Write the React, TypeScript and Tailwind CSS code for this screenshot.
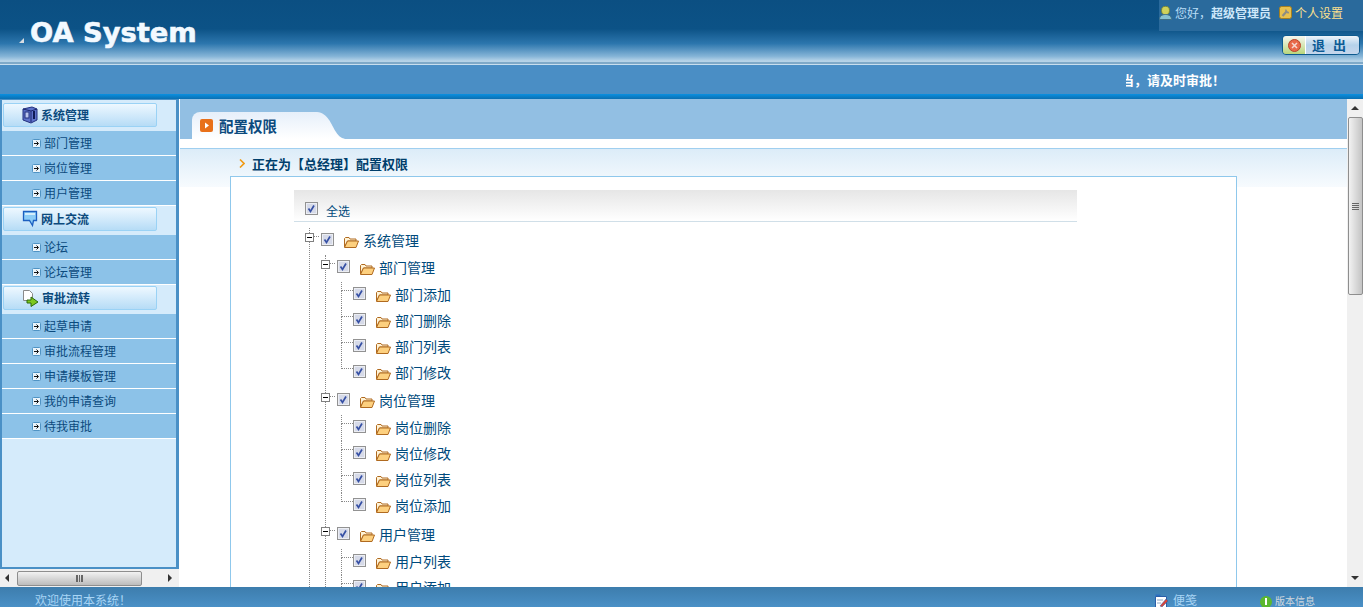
import React from 'react';

const CJK = 'font-["Noto_Sans_CJK_SC","Liberation_Sans",sans-serif]';

function ItemIcon() {
  return (
    <svg width="9" height="9" viewBox="0 0 9 9" className="shrink-0">
      <rect x="0.5" y="0.5" width="8" height="8" rx="1" fill="#eaf4fb" stroke="#4f93c4" />
      <path d="M2 4.5h4M4.5 2.5l2 2-2 2" fill="none" stroke="#111" strokeWidth="1" />
    </svg>
  );
}

function CheckBox() {
  return (
    <svg width="13" height="13" viewBox="0 0 13 13" className="shrink-0">
      <rect x="0.5" y="0.5" width="12" height="12" fill="#cfd4e2" stroke="#929292" />
      <rect x="1.5" y="1.5" width="10" height="10" fill="#d6dae8" stroke="#eceef4" />
      <path d="M3.5 6.5l2 3 3.5-6" fill="none" stroke="#3650a4" strokeWidth="1.7" />
    </svg>
  );
}

function FolderIcon() {
  return (
    <svg width="15" height="11" viewBox="0 0 15 11" className="shrink-0">
      <path d="M0.5 10V1.5L1.5 0.5H5L6 2H12V4H3.5L0.5 10Z" fill="#fff3d6" stroke="#b06a20" />
      <path d="M0.5 10.5L3.5 4H14.5L12 10.5Z" fill="#fdd07f" stroke="#b06a20" />
    </svg>
  );
}

function Expander() {
  return (
    <span className="relative flex h-[9px] w-[9px] shrink-0 items-center justify-center border border-[#808080] bg-white">
      <span className="h-px w-[5px] bg-black" />
    </span>
  );
}

function BranchRow({ label }: { label: string }) {
  return (
    <div className="flex h-[26px] items-start">
      <div className="-ml-[5px] mt-[5px]">
        <Expander />
      </div>
      <span className="mt-[8px] h-[1px] w-[5px] self-start border-t border-dotted border-[#888]" />
      <div className="ml-[2px] mt-[5px]">
        <CheckBox />
      </div>
      <div className="ml-[10px] mt-[9px]">
        <FolderIcon />
      </div>
      <span className="ml-[4px] text-[14px] leading-[24px]">{label}</span>
    </div>
  );
}

function LeafRow({ label, last }: { label: string; last?: boolean }) {
  return (
    <div className="flex h-[26px] items-start">
      <div className="flex h-full w-[12px] shrink-0 flex-col">
        <div className="h-[9px] border-b border-l border-dotted border-[#888]" />
        {!last && <div className="flex-1 border-l border-dotted border-[#888]" />}
      </div>
      <div className="mt-[5px]">
        <CheckBox />
      </div>
      <div className="ml-[10px] mt-[9px]">
        <FolderIcon />
      </div>
      <span className="ml-[4px] text-[14px] leading-[24px]">{label}</span>
    </div>
  );
}

const GROUPS = [
  { name: '部门管理', top: 'pt-[0px]', gap: 'mt-[1px]', leaves: ['部门添加', '部门删除', '部门列表', '部门修改'] },
  { name: '岗位管理', top: 'pt-[2px]', gap: 'mt-[1px]', leaves: ['岗位删除', '岗位修改', '岗位列表', '岗位添加'] },
  { name: '用户管理', top: 'pt-[3px]', gap: 'mt-[1px]', leaves: ['用户列表', '用户添加', '用户删除', '用户修改'] },
];

const MENU = [
  { title: '系统管理', icon: 'cube', tall: 'h-[31px] pt-[3px]', items: ['部门管理', '岗位管理', '用户管理'] },
  { title: '网上交流', icon: 'chat', tall: 'h-[29px] pt-[1px]', items: ['论坛', '论坛管理'] },
  { title: '审批流转', icon: 'doc', tall: 'h-[29px] pt-[1px]', items: ['起草申请', '审批流程管理', '申请模板管理', '我的申请查询', '待我审批'] },
];

function MenuIcon({ kind }: { kind: string }) {
  if (kind === 'cube') {
    return (
      <svg width="16" height="18" viewBox="0 0 16 18" className="shrink-0">
        <path d="M1 3l9-2 5 2v11l-6 3-8-3z" fill="#5d72c9" stroke="#23307e" />
        <path d="M9 5v11M1 3l8 2 6-2" fill="none" stroke="#1c2770" />
        <rect x="3" y="6" width="4" height="6" fill="#b9c6ee" stroke="#23307e" />
        <rect x="11" y="5" width="2" height="8" fill="#0e1a55" />
      </svg>
    );
  }
  if (kind === 'chat') {
    return (
      <svg width="16" height="18" viewBox="0 0 16 18" className="shrink-0">
        <path d="M1.5 1.5h13v9h-3l-1 5-3-5h-6z" fill="#8ccdf7" stroke="#1c5fc0" strokeWidth="1.3" />
        <path d="M3 3h10v2H3z" fill="#d4eefc" />
      </svg>
    );
  }
  return (
    <svg width="17" height="17" viewBox="0 0 17 17" className="shrink-0">
      <path d="M1.5 0.5h6l3 3v7h-9z" fill="#fff" stroke="#8a8a8a" />
      <path d="M5 10h4V7l7 5-7 4.5V13H5z" fill="#7ec81e" stroke="#2b6b0c" />
    </svg>
  );
}

function Sidebar() {
  return (
    <div className="flex w-[180px] shrink-0 flex-col border-r border-white">
      <div className="flex h-[470px] flex-col overflow-hidden border-b-2 border-l-2 border-r-[3px] border-t border-[#4a90c6] bg-[#d5ebfb]">
        {MENU.map((group) => (
          <div key={group.title}>
            <div className={`${group.tall} pl-px`}>
              <div className="flex h-[24px] w-[154px] items-center gap-[3px] rounded-[2px] border border-[#9ad2f5] bg-gradient-to-b from-[#eef8ff] to-[#b6dcf6] pl-[18px]">
                <MenuIcon kind={group.icon} />
                <span className="text-[12px] font-bold text-[#0b4a7d]">{group.title}</span>
              </div>
            </div>
            {group.items.map((item) => (
              <div
                key={item}
                className="-mr-[3px] flex h-[25px] items-center gap-[3px] border-b border-white bg-[#8cc2e8] pl-[30px] text-[12px] text-[#0b4a7d]"
              >
                <ItemIcon />
                {item}
              </div>
            ))}
          </div>
        ))}
      </div>
      <div className="flex h-[18px] items-center bg-[#f0f0f0] px-[5px]">
        <span className="h-0 w-0 border-y-[4px] border-r-[4px] border-y-transparent border-r-[#333]" />
        <div className="ml-[8px] flex h-[15px] w-[125px] items-center justify-center rounded-[2px] border border-[#8e8e8e] bg-gradient-to-b from-[#f2f2f2] to-[#bcbcbc]">
          <span className="h-[7px] w-[7px] border-x border-[#666] bg-[repeating-linear-gradient(90deg,#666_0,#666_1px,transparent_1px,transparent_2px)]" />
        </div>
        <span className="ml-auto mr-[2px] h-0 w-0 border-y-[4px] border-l-[4px] border-y-transparent border-l-[#333]" />
      </div>
    </div>
  );
}

function VScrollbar() {
  return (
    <div className="flex w-[16px] shrink-0 flex-col items-center bg-[#f0f0f0]">
      <span className="mt-[7px] h-0 w-0 border-x-[4px] border-b-[4px] border-x-transparent border-b-[#333]" />
      <div className="mt-[7px] flex h-[178px] w-[15px] items-center justify-center rounded-[2px] border border-[#8e8e8e] bg-gradient-to-r from-[#f2f2f2] to-[#c4c4c4]">
        <span className="h-[7px] w-[7px] bg-[repeating-linear-gradient(0deg,#666_0,#666_1px,transparent_1px,transparent_2px)]" />
      </div>
      <span className="mb-[7px] mt-auto h-0 w-0 border-x-[4px] border-t-[4px] border-x-transparent border-t-[#333]" />
    </div>
  );
}

function Content() {
  return (
    <div className="min-w-0 flex-1 overflow-hidden bg-white text-[#004a7c]">
      <div className="flex h-[40px] items-end bg-[#92bfe3] pl-[12px]">
        <div className="flex h-[27px] w-[122px] items-center rounded-tl-[8px] bg-gradient-to-b from-[#e6effa] to-white pl-[8px]">
          <svg width="13" height="13" viewBox="0 0 13 13" className="shrink-0">
            <rect width="13" height="13" rx="2" fill="#e8701a" />
            <path d="M5 3.5l4 3-4 3z" fill="#fff" />
          </svg>
          <span className="ml-[6px] whitespace-nowrap text-[14.5px] font-bold text-[#0b4a7d]">配置权限</span>
        </div>
        <svg width="31" height="27" viewBox="0 0 31 27" className="shrink-0">
          <defs>
            <linearGradient id="tabfill" x1="0" y1="0" x2="0" y2="1">
              <stop offset="0" stopColor="#e6effa" />
              <stop offset="1" stopColor="#ffffff" />
            </linearGradient>
          </defs>
          <path d="M0 0H3C14 1 17 12 22 20C25 25 28 26 31 27H0Z" fill="url(#tabfill)" />
        </svg>
      </div>
      <div className="h-[9px] bg-white" />
      <div className="h-[39px] border-t border-[#9fcff0] bg-gradient-to-b from-[#dcecf8] to-[#f7fbfe]">
        <div className="flex h-[29px] items-center pl-[59px]">
          <svg width="6" height="9" viewBox="0 0 6 9" className="shrink-0">
            <path d="M1 0.5l4 4-4 4" fill="none" stroke="#f09a14" strokeWidth="1.6" />
          </svg>
          <span className="ml-[7px] whitespace-nowrap text-[13px] font-bold text-[#003e6b]">正在为【总经理】配置权限</span>
        </div>
      </div>
      <div className="relative -mt-[11px] ml-[50px] h-[430px] w-[1007px] border border-[#8fc8ec] bg-white pl-[63px] pt-[13px]">
        <div className="flex h-[32px] w-[783px] items-start border-b border-[#d0dfe8] bg-gradient-to-b from-[#e6e6e6] to-white pl-[11px]">
          <div className="mt-[12px]">
            <CheckBox />
          </div>
          <span className="ml-[8px] mt-[12px] text-[12px] leading-[18px]">全选</span>
        </div>
        <div className="ml-[15px] mt-[6px] border-l border-dotted border-[#888]">
          <BranchRow label="系统管理" />
          <div className="ml-[15px] mt-px border-l border-dotted border-[#888]">
            {GROUPS.map((group) => (
              <div key={group.name} className={group.top}>
                <BranchRow label={group.name} />
                <div className={`ml-[15px] ${group.gap}`}>
                  {group.leaves.map((leaf, i) => (
                    <LeafRow key={leaf} label={leaf} last={i === group.leaves.length - 1} />
                  ))}
                </div>
              </div>
            ))}
          </div>
        </div>
      </div>
    </div>
  );
}

export default function App() {
  return (
    <div className={`flex h-[607px] w-[1363px] flex-col overflow-hidden bg-white ${CJK}`}>
      {/* top banner */}
      <div className="flex h-[65px] shrink-0 justify-between border-b border-[#c8deee] bg-[linear-gradient(180deg,#0b4f82_0%,#0c5286_45%,#2c76ad_68%,#85b4d7_88%,#bcd7ea_96%,#7fa9c8_97%)]">
        <div className="flex items-start pl-[19px] pt-[17px]">
          <span className="mt-[21px] h-0 w-0 border-b-[5px] border-l-[5px] border-b-[#d8dde2] border-l-transparent" />
          <span className='ml-[6px] whitespace-nowrap font-["DejaVu_Sans",sans-serif] text-[27.3px] font-bold leading-[32px] text-[#f2f9ff] [-webkit-text-stroke:0.6px_#f2f9ff]'>
            OA System
          </span>
        </div>
        <div className="flex w-[204px] flex-col items-end">
          <div className="flex h-[31px] w-[204px] items-center bg-[#2a6a9c] pb-[6px] text-[12px]">
            <svg width="13" height="14" viewBox="0 0 13 14" className="shrink-0">
              <ellipse cx="6.5" cy="4.5" rx="4" ry="4.2" fill="#cfd25c" stroke="#76843a" />
              <path d="M0.5 13.5c0-3.5 2.5-5 6-5s6 1.5 6 5z" fill="#86c0d2" stroke="#3f6f86" />
            </svg>
            <span className="ml-[3px] text-[#b8dcf5]">您好，</span>
            <span className="font-bold text-[#cfe8fa]">超级管理员</span>
            <svg width="13" height="13" viewBox="0 0 13 13" className="ml-[8px] shrink-0">
              <rect x="0.5" y="0.5" width="12" height="12" rx="2" fill="#e8c14e" stroke="#a37f22" />
              <path d="M3.5 10l4.5-5" stroke="#8d8d85" strokeWidth="2.2" />
              <path d="M7 3.5a2.5 2.5 0 0 0 3 3" fill="none" stroke="#8d8d85" strokeWidth="1.6" />
            </svg>
            <span className="ml-[3px] text-[#fce08f]">个人设置</span>
          </div>
          <div className="mr-[3px] mt-[4px] flex h-[20px] w-[78px] overflow-hidden rounded-[4px] border border-[#0e5a8e]">
            <div className="flex w-[22px] items-center justify-center bg-gradient-to-b from-[#f7f7f0] to-[#b9d67a]">
              <svg width="13" height="13" viewBox="0 0 13 13">
                <circle cx="6.5" cy="6.5" r="6" fill="#e8694a" stroke="#b8442a" />
                <path d="M4 4l5 5M9 4l-5 5" stroke="#f6d8d0" strokeWidth="1.5" />
              </svg>
            </div>
            <div className="flex flex-1 items-center justify-center gap-[8px] border-l border-white bg-gradient-to-b from-[#eef4fa] via-[#b4d2ea] to-[#c6d6ec] pr-[7px] text-[13px] font-bold text-[#0b5a94]">
              <span>退</span>
              <span>出</span>
            </div>
          </div>
        </div>
      </div>

      {/* notice bar */}
      <div className="flex h-[29px] shrink-0 justify-end bg-[#4a8ec5] pr-[138px]">
        <div className="flex w-[99px] justify-end overflow-hidden whitespace-nowrap text-[13px] font-bold leading-[29px] text-white">
          当，请及时审批！
        </div>
      </div>
      <div className="h-[5px] shrink-0 bg-gradient-to-b from-[#0a90e0] to-[#0b6fb2]" />

      {/* body */}
      <div className="flex min-h-0 flex-1">
        <Sidebar />
        <Content />
        <VScrollbar />
      </div>

      {/* footer */}
      <div className="flex h-[20px] shrink-0 items-start overflow-hidden bg-gradient-to-b from-[#3d7dad] to-[#4a90c6]">
        <span className="ml-[35px] mt-[4px] text-[12px] leading-[18px] text-[#a8d5f5]">欢迎使用本系统！</span>
        <svg width="15" height="15" viewBox="0 0 15 15" className="ml-auto mt-[7px] shrink-0">
          <path d="M0.5 0.5h5v2h-5z" fill="#2a6ec0" />
          <path d="M0.5 2.5h11v11h-11z" fill="#fff" stroke="#2a5ea8" />
          <path d="M2 6h6M2 9h4" stroke="#8ea6c4" />
          <path d="M5 12l6-7 2 2-6 6z" fill="#d8443a" stroke="#2a5ea8" strokeWidth="0.5" />
        </svg>
        <span className="ml-[3px] mt-[4px] text-[12px] leading-[18px] text-[#a8d5f5]">便笺</span>
        <svg width="12" height="12" viewBox="0 0 12 12" className="ml-[63px] mt-[9px] shrink-0">
          <circle cx="6" cy="6" r="6" fill="#5cb82e" />
          <rect x="5" y="2" width="2" height="7" fill="#fff" />
        </svg>
        <span className="ml-[3px] mr-[48px] mt-[5px] text-[10px] leading-[18px] text-[#d0d8de]">版本信息</span>
      </div>
    </div>
  );
}
